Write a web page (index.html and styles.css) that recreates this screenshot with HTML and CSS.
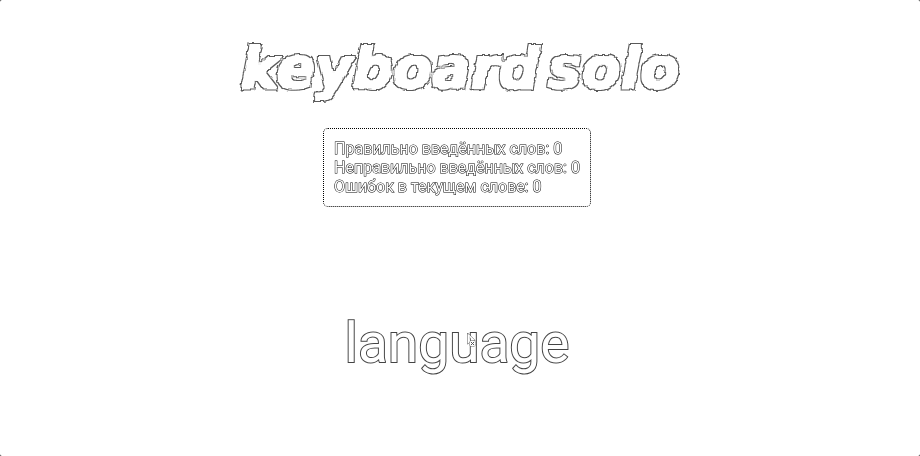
FILE: index.html
```html
<!DOCTYPE html>
<html lang="ru">
<head>
<meta charset="utf-8">
<title>keyboard solo</title>
<link rel="stylesheet" href="styles.css">
</head>
<body>
<div class="page">
  <svg class="defs" width="0" height="0" aria-hidden="true">
    <filter id="rough" x="-5%" y="-20%" width="110%" height="140%" color-interpolation-filters="sRGB">
      <feTurbulence type="fractalNoise" baseFrequency="0.2" numOctaves="1" seed="4" result="noise"/>
      <feMorphology in="SourceAlpha" operator="dilate" radius="2" result="bold"/>
      <feDisplacementMap in="bold" in2="noise" scale="4" xChannelSelector="R" yChannelSelector="G" result="shape"/>
      <feMorphology in="shape" operator="erode" radius="1" result="inner"/>
      <feComposite in="shape" in2="inner" operator="out" result="edge"/>
      <feComponentTransfer in="edge">
        <feFuncA type="linear" slope="0.65"/>
      </feComponentTransfer>
    </filter>
  </svg>
  <h1 class="title"><span>keyboard</span> <span>solo</span></h1>
  <main class="game">
    <div class="stats">
      <p>Правильно введённых слов: 0</p>
      <p>Неправильно введённых слов: 0</p>
      <p>Ошибок в текущем слове: 0</p>
    </div>
    <div class="word">language
      <svg class="cursor" viewBox="0 0 11 17" aria-hidden="true">
        <path d="M1.5 1v11l2.5-2 1.5 4M1.5 1l7.5 7.5H6"/>
        <circle cx="6.5" cy="11.5" r="3"/>
        <path d="M5 10l3 3M8 10l-3 3"/>
      </svg>
    </div>
  </main>
</div>
</body>
</html>
```
FILE: styles.css
```css
* {
  box-sizing: border-box;
}

body {
  margin: 0;
  background: #333;
  font-family: Roboto, "Liberation Sans", sans-serif;
}

.page {
  min-height: 100vh;
  padding-top: 32px;
  border-radius: 2px;
  background: #fff;
  color: #fff;
}

.defs {
  position: absolute;
}

.title {
  display: flex;
  justify-content: center;
  gap: 8px;
  margin: 0;
  font: italic 700 57px/72px "DejaVu Sans", sans-serif;
  color: #000;
  filter: url(#rough);
}

.game {
  display: flex;
  flex-direction: column;
  align-items: center;
  padding: 24px 6px 0 0;
}

.stats {
  padding: 10px;
  border: 1px dotted #000;
  border-radius: 5px;
  font-size: 16px;
  line-height: 19px;
  -webkit-text-stroke: 1px #000;
  paint-order: stroke fill;
  filter: grayscale(1);
}

.stats p {
  margin: 0;
}

.word {
  position: relative;
  margin-top: 101px;
  font-size: 55px;
  line-height: 70px;
  -webkit-text-stroke: 2px #444;
  paint-order: stroke fill;
  filter: grayscale(1);
}

.cursor {
  position: absolute;
  top: 24px;
  left: 54%;
  width: 11px;
  height: 17px;
  fill: #fff;
  stroke: #555;
  stroke-width: 1;
}
```
